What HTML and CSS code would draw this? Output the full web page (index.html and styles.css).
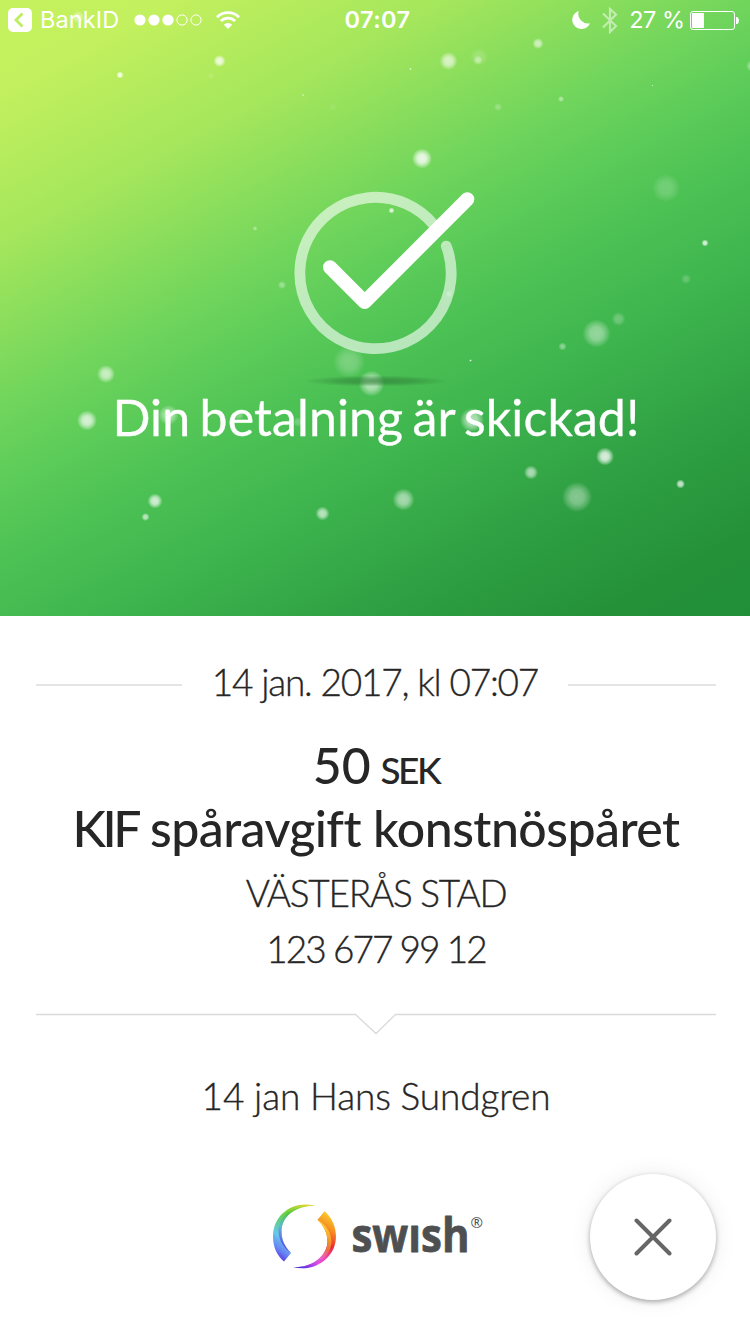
FILE: index.html
```html
<!DOCTYPE html>
<html lang="sv">
<head>
<meta charset="utf-8">
<title>Swish</title>
<link rel="stylesheet" href="styles.css">
</head>
<body>
<main class="screen">
  <section class="hero">
    <svg class="sparkles" id="sparkles" viewBox="0 0 750 616" aria-hidden="true">
      <defs>
        <radialGradient id="glow">
          <stop offset="0" stop-color="#fff"/>
          <stop offset=".45" stop-color="#fff" stop-opacity=".88"/>
          <stop offset=".78" stop-color="#fff" stop-opacity=".4"/>
          <stop offset="1" stop-color="#fff" stop-opacity="0"/>
        </radialGradient>
      </defs>
    </svg>
    <header class="status">
      <div class="status-left">
        <svg class="back" viewBox="0 0 24 24"><rect width="24" height="24" rx="5" fill="#fff"/><path d="M14.500 5.500 8 12l6.500 6.500" fill="none" stroke="#bcee5d" stroke-width="2.800"/></svg>
        <span class="back-label">BankID</span>
        <svg class="signal" viewBox="0 0 68 12"><g fill="#fff"><circle cx="6" cy="6" r="5.600"/><circle cx="20" cy="6" r="5.600"/><circle cx="34" cy="6" r="5.600"/></g><g fill="none" stroke="#fff"><circle cx="48" cy="6" r="5.100"/><circle cx="62" cy="6" r="5.100"/></g></svg>
        <svg class="wifi" viewBox="0 0 24 18"><g fill="none" stroke="#fff" stroke-width="2.900"><path d="M1 6.200a15.500 15.500 0 0 1 22 0"/><path d="M4.900 10.100a10 10 0 0 1 14.200 0"/></g><path d="M12 18l-4.200-4.200a6 6 0 0 1 8.400 0z" fill="#fff"/></svg>
      </div>
      <div class="clock">07:07</div>
      <div class="status-right">
        <svg class="moon" viewBox="0 0 18 18"><path d="M6.700 0A9.200 9.200 0 1 0 18 12.200 9.600 9.600 0 0 1 6.700 0z" fill="#fff"/></svg>
        <svg class="bluetooth" viewBox="0 0 16 27"><path d="M1 6.500 14 19l-6 6V2l6 5.500L1 20.500" fill="none" stroke="#fff" stroke-opacity=".5" stroke-width="2.200"/></svg>
        <span class="percent">27 %</span>
        <svg class="battery" viewBox="0 0 49 19"><rect x=".5" y=".5" width="44" height="18" rx="2.500" fill="none" stroke="#fff"/><rect x="2" y="2" width="12" height="15" rx="1" fill="#fff"/><path d="M46 6h1.200q1.800 1 1.800 3.500t-1.800 3.500H46z" fill="#fff"/></svg>
      </div>
    </header>
    <svg class="check" viewBox="0 0 190 200" fill="none" stroke-linecap="round">
      <defs><radialGradient id="shade"><stop offset="0" stop-color="#2d7a36" stop-opacity=".65"/><stop offset=".5" stop-color="#2d7a36" stop-opacity=".45"/><stop offset="1" stop-color="#2d7a36" stop-opacity="0"/></radialGradient></defs>
      <ellipse cx="86" cy="191" rx="72" ry="5.500" fill="url(#shade)"/>
      <path d="M156.300 56.200A75.700 75.700 0 1 1 143.800 34.700" stroke="#fff" stroke-opacity=".6" stroke-width="10.800" stroke-linecap="butt"/>
      <path d="M151.200 58A5.400 5.400 0 0 1 161.400 54.300z" fill="#fff" fill-opacity=".6"/>
      <path d="M40 77.300 74.700 112 177.300 9.300" stroke="#fff" stroke-width="14" stroke-linejoin="round"/>
    </svg>
    <h1 class="headline">Din betalning är skickad!</h1>
  </section>

  <section class="receipt">
    <div class="date-row"><span class="rule"></span><time class="date">14 jan. 2017, kl 07:07</time><span class="rule"></span></div>
    <p class="amount">50 <span class="currency">SEK</span></p>
    <p class="message"><span class="caps">KIF</span> spåravgift konstnöspåret</p>
    <p class="payee">VÄSTERÅS STAD</p>
    <p class="number">123 677 99 12</p>
    <svg class="divider" viewBox="0 0 680 22"><path d="M0 1.500H319.500L340 20.500 359.500 1.500H680" fill="none" stroke="#dadada" stroke-width="1.300"/></svg>
    <p class="payer">14 jan Hans Sundgren</p>
  </section>

  <footer class="footer">
    <svg class="logo" viewBox="0 0 212 68" role="img" aria-label="swish">
      <defs>
        <linearGradient id="cool" x1=".8" y1="0" x2=".25" y2="1"><stop offset="0" stop-color="#e8d52e"/><stop offset=".3" stop-color="#72d437"/><stop offset=".5" stop-color="#60ce87"/><stop offset=".7" stop-color="#68c7ed"/><stop offset=".88" stop-color="#6684f2"/><stop offset="1" stop-color="#5940e8"/></linearGradient>
        <linearGradient id="coolIn" x1=".7" y1="0" x2=".3" y2="1"><stop offset="0" stop-color="#bad934"/><stop offset=".3" stop-color="#4fc44a"/><stop offset=".6" stop-color="#5cb9d4"/><stop offset="1" stop-color="#673be9"/></linearGradient>
        <linearGradient id="warm" x1=".7" y1="0" x2=".2" y2="1"><stop offset="0" stop-color="#fbc72b"/><stop offset=".2" stop-color="#f58b23"/><stop offset=".42" stop-color="#ed2830"/><stop offset=".62" stop-color="#ef45aa"/><stop offset=".78" stop-color="#e448ef"/><stop offset="1" stop-color="#4a32df"/></linearGradient>
        <linearGradient id="warmIn" x1=".6" y1="0" x2=".3" y2="1"><stop offset="0" stop-color="#ffd633"/><stop offset=".3" stop-color="#f49a27"/><stop offset=".5" stop-color="#ec6e48"/><stop offset=".72" stop-color="#ec62d3"/><stop offset="1" stop-color="#8c33e5"/></linearGradient>
      </defs>
      <path d="M43 2.700C22-3 1 11 1 33.500 1 44 5 52.500 12 58.500L19 50C12 43 9.500 36 9.500 27.500 10 13 22 2 43 2.700z" fill="url(#cool)"/>
      <path d="M43 2.700C20 1 6.500 14 6.500 28 7 38 11 44 19 50 11.500 42.500 9.500 36 9.500 28 10 14 22 3 43 2.700z" fill="url(#coolIn)"/>
      <path d="M52.500 8.200 45.500 16.700C52 23 55.500 30 55.500 38.500 55 53 40 65.500 21 64 42 70 64 55 64 33.500 64 23 59.500 14 52.500 8.200z" fill="url(#warm)"/>
      <path d="M45.500 16.700C54 22 59 29 59.500 37.500 60 53 44 65.500 21 64 40 65 55 53 55.500 39 55.500 30 52 23 45.500 16.700z" fill="url(#warmIn)"/>
      <text class="wordmark" x="79.500" y="48.500" textLength="118" lengthAdjust="spacingAndGlyphs">swısh</text>
      <text class="registered" x="198.500" y="25">®</text>
    </svg>
    <button class="close" aria-label="Stäng"><svg class="close-icon" viewBox="0 0 38 38"><path d="M2.500 2.500 35.500 35.500M35.500 2.500 2.500 35.500" stroke="#666" stroke-width="4" stroke-linecap="round"/></svg></button>
  </footer>
</main>
<script src="sparkles.js"></script>
</body>
</html>
```
FILE: styles.css
```css
* { box-sizing: border-box; }
body { margin: 0; background: #fff; font-family: Lato, "Open Sans", sans-serif; color: #262626; }
p, h1 { margin: 0; white-space: nowrap; }
svg { display: block; flex: none; }
.screen { width: 750px; height: 1334px; overflow: hidden; display: flex; flex-direction: column; }

.hero {
  position: relative; height: 616px; display: flex; flex-direction: column; align-items: center; flex: none;
  background: linear-gradient(151.5deg, #c5f15e 0%, #c3f05e 9%, #a4e65c 24%, #70d55c 40%, #5bcb59 48%, #4cc154 55.5%, #3eb54e 65.5%, #2fa043 79%, #249139 92%, #208f38 100%);
}
.sparkles { position: absolute; inset: 0; width: 750px; height: 616px; }
.status {
  position: relative; width: 750px; height: 40px; display: grid; grid-template-columns: 1fr auto 1fr; align-items: center;
  padding: 0 11px 0 8px; color: #fff; font-family: Inter, sans-serif; font-size: 23.500px; line-height: 40px;
}
.status-left, .status-right { display: flex; align-items: center; }
.status-right { justify-content: flex-end; }
.back { width: 24px; height: 24px; }
.back-label { margin-left: 8px; width: 79px; white-space: nowrap; letter-spacing: .1px; }
.signal { width: 68px; height: 12px; margin-left: 15px; }
.wifi { width: 24px; height: 18px; margin-left: 14px; }
.clock { font-weight: 600; letter-spacing: .4px; padding-left: 4px; margin-right: -4px; }
.moon { width: 18px; height: 18px; }
.bluetooth { width: 16px; height: 27px; margin-left: 12px; }
.percent { margin-left: 11px; white-space: nowrap; letter-spacing: -.5px; }
.battery { width: 49px; height: 19px; margin-left: 5.500px; }
.check { position: relative; width: 190px; height: 200px; margin: 150px 0 0 20px; }
.headline { position: relative; color: #fff; font-size: 50px; font-weight: 400; line-height: 60px; margin: -3px 0 0 2px; word-spacing: -3.500px; letter-spacing: .100px; -webkit-text-stroke: .3px #fff; }

.receipt { padding: 44px 34px 0 36px; display: flex; flex-direction: column; align-items: center; text-align: center; font-weight: 300; font-size: 37px; -webkit-text-stroke: .35px #262626; }
.date-row { align-self: stretch; height: 44px; line-height: 44px; display: flex; align-items: center; justify-content: space-between; }
.rule { width: 146px; height: 2px; background: #e4e4e4; margin-top: 6px; }
.rule:last-child { width: 148px; }
.date { white-space: nowrap; letter-spacing: -1.200px; }
.amount { margin-top: 31px; font-size: 50px; line-height: 60px; font-weight: 500; word-spacing: -3px; -webkit-text-stroke: 0; }
.currency { font-size: 37px; letter-spacing: -2.500px; }
.message { margin-top: -2px; font-size: 50px; line-height: 60px; font-weight: 500; letter-spacing: -.550px; -webkit-text-stroke: 0; }
.caps { letter-spacing: -3.500px; }
.payee { margin-top: 7px; line-height: 56px; letter-spacing: -1.250px; }
.number { line-height: 56px; letter-spacing: -1.950px; }
.divider { width: 680px; height: 22px; margin-top: 36px; }
.payer { line-height: 44px; margin-top: 39px; letter-spacing: -.150px; }

.footer { display: flex; align-items: flex-start; padding: 56px 34px 0 272px; justify-content: space-between; }
.logo { width: 212px; height: 68px; margin-top: 29px; overflow: visible; }
.wordmark { font-family: "Open Sans", sans-serif; font-weight: 700; font-size: 46px; fill: #4e4f51; stroke: #4e4f51; stroke-width: .8; stroke-linejoin: round; }
.registered { font-family: "Open Sans", sans-serif; font-size: 15px; fill: #4e4f51; }
.close { width: 126px; height: 126px; border: 0; border-radius: 50%; background: #fff; padding: 0; display: grid; place-items: center; box-shadow: 0 2px 5px rgba(0,0,0,.32), 0 0 22px rgba(0,0,0,.08); }
.close-icon { width: 38px; height: 38px; }
```
FILE: sparkles.js
```js
// x, y, radius, opacity
const sparkles = [
  [219.5, 61, 6, .8], [120, 75, 3.5, .9], [78, 17, 6, .45], [211, 76, 3, .15], [303, 95, 1.2, .5],
  [448.5, 61, 9, .65], [478, 60, 4.500, .4], [479, 57, 9, .16], [538, 43.500, 5.500, .6], [410.500, 69, 1.300, .7],
  [498, 107, 4, .25], [561, 99, 3, .45], [652.500, 85.500, 1, .7], [333, 107, 4, .08], [752, 66, 6, .4],
  [422, 158.500, 10, .85], [666, 188, 14, .2], [705, 243, 3.500, .8], [686, 279, 5, .2], [391.500, 210.500, 3, .8],
  [255, 228.500, 2.500, .35], [282, 285, 4, .35], [449, 294, 3.500, .25], [349, 362, 16, .25], [371.500, 383.500, 13, .58],
  [596.500, 333.500, 14, .45], [618.500, 319, 7, .25], [562.500, 346.500, 4, .4], [470.500, 360.500, 1.300, .9],
  [106, 374, 9, .65], [87, 420.500, 10, .75], [168.500, 415, 10, .5], [239, 415, 5, .3], [298, 422, 5, .25], [472, 420, 12, .6],
  [605, 456.500, 9, .82], [531, 472.500, 7, .6], [577, 497, 15, .42], [680.500, 484, 4.500, .75],
  [403.500, 499.500, 11, .56], [322.500, 513.500, 7, .65], [155, 501, 7.500, .75], [145.500, 517, 4, .65]
];
const layer = document.getElementById("sparkles");
for (const [x, y, r, opacity] of sparkles) {
  const dot = document.createElementNS("http://www.w3.org/2000/svg", "circle");
  dot.setAttribute("cx", x);
  dot.setAttribute("cy", y);
  dot.setAttribute("r", r);
  dot.setAttribute("fill", "url(#glow)");
  dot.setAttribute("opacity", opacity);
  layer.appendChild(dot);
}
```
